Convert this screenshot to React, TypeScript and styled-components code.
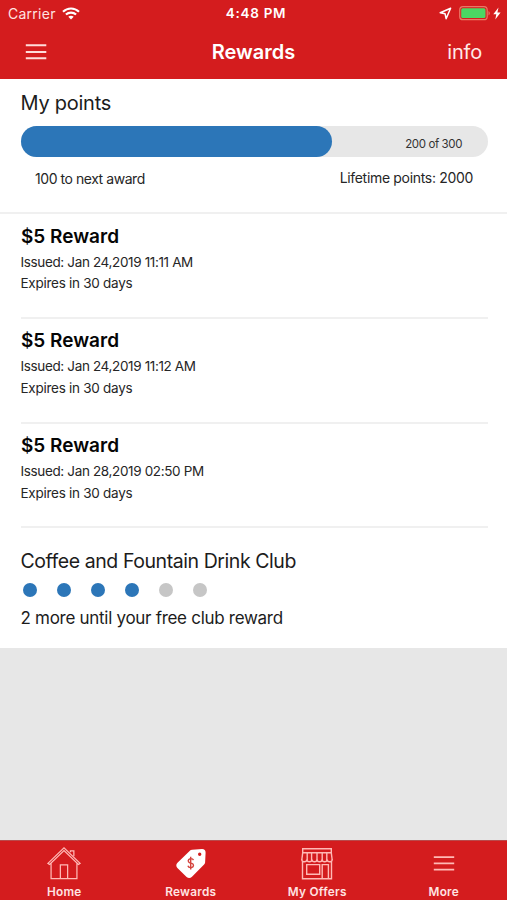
import React from "react";
import styled, { createGlobalStyle } from "styled-components";

const GlobalStyle = createGlobalStyle`
  * { box-sizing: border-box; }
  html, body { margin: 0; padding: 0; }
  body { font-family: Inter, "Liberation Sans", sans-serif; }
`;

const Screen = styled.div`
  display: flex;
  flex-direction: column;
  width: 507px;
  height: 900px;
  overflow: hidden;
  background: #e7e7e7;
  color: #1c1c1c;
`;

const Header = styled.header`
  flex: none;
  height: 79px;
  background: #d41c1e;
  color: #fff;
`;

const StatusBar = styled.div`
  display: grid;
  grid-template-columns: 1fr auto 1fr;
  align-items: center;
  height: 27px;
  padding: 0 6px 0 8px;
`;

const StatusGroup = styled.div<{ $end?: boolean }>`
  display: flex;
  align-items: center;
  justify-content: ${(p) => (p.$end ? "flex-end" : "flex-start")};
`;

const Carrier = styled.span`
  margin-right: 6px;
  color: #ffe3e2;
  font-size: 14px;
  line-height: 27px;
  letter-spacing: 0.26px;
`;

const Clock = styled.span`
  padding-left: 3px;
  font-size: 13.5px;
  font-weight: 600;
  line-height: 27px;
  letter-spacing: 0.7px;
`;

const NavBar = styled.div`
  display: grid;
  grid-template-columns: 1fr auto 1fr;
  align-items: center;
  height: 50px;
  padding: 0 25px;
`;

const NavTitle = styled.h1`
  margin: 0;
  font-size: 20px;
  font-weight: 600;
  line-height: 50px;
  letter-spacing: 0;
`;

const InfoButton = styled.button`
  justify-self: end;
  padding: 0;
  border: 0;
  background: none;
  color: #ffe9e8;
  font: 400 20px/50px Inter, sans-serif;
  letter-spacing: -0.2px;
`;

const MenuButton = styled.button`
  display: flex;
  padding: 0;
  border: 0;
  background: none;
`;

const Points = styled.section`
  flex: none;
  height: 135px;
  padding: 12px 20px 0 20.5px;
  border-bottom: 2px solid #f0f0f0;
  background: #fff;
`;

const SectionTitle = styled.h2<{ $spacing: number; $size: number }>`
  margin: 0;
  font-size: ${(p) => p.$size}px;
  font-weight: 400;
  line-height: 24px;
  letter-spacing: ${(p) => p.$spacing}px;
  white-space: nowrap;
`;

const Track = styled.div`
  display: flex;
  height: 31.5px;
  margin-top: 10.5px;
  width: 467px;
  border-radius: 16px;
  background: #e7e7e7;
`;

const Fill = styled.div`
  flex: none;
  border-radius: 16px;
  background: #2c76b8;
`;

const TrackLabel = styled.span`
  flex: 1;
  padding: 1px 25.5px 0 0;
  color: #333;
  font-size: 11.5px;
  line-height: 34px;
  letter-spacing: -0.4px;
  text-align: right;
`;

const PointsMeta = styled.div`
  display: flex;
  justify-content: space-between;
  padding: 12px 14px 0 14.5px;
`;

const MetaText = styled.span<{ $spacing: number; $drop?: boolean }>`
  padding-top: ${(p) => (p.$drop ? 1 : 0)}px;
  color: #262626;
  font-size: 14px;
  line-height: 18px;
  letter-spacing: ${(p) => p.$spacing}px;
`;

const Rewards = styled.section`
  flex: none;
  height: 434px;
  padding: 0 19.5px 0 20.5px;
  background: #fff;
`;

const RewardRow = styled.article`
  height: 104.8px;
  padding-top: 9.5px;
  border-bottom: 2px solid #f0f0f0;
`;

const RewardTitle = styled.h3`
  margin: 0 0 2px 0.5px;
  color: #050505;
  font-size: 19px;
  font-weight: 600;
  line-height: 26px;
  letter-spacing: 0;
`;

const RewardDetail = styled.p<{ $spacing: number }>`
  margin: 0;
  color: #262626;
  font-size: 13.5px;
  line-height: 21.5px;
  letter-spacing: ${(p) => p.$spacing}px;
`;

const Club = styled.div`
  padding-top: 20.5px;
`;

const Dots = styled.div`
  display: flex;
  gap: 20.2px;
  margin: 10px 0 0 2px;
`;

const Dot = styled.span<{ $filled: boolean }>`
  width: 14px;
  height: 14px;
  border-radius: 50%;
  background: ${(p) => (p.$filled ? "#2c76b8" : "#c6c6c6")};
`;

const ClubNote = styled.p`
  margin: 9px 0 0;
  font-size: 17px;
  font-weight: 400;
  line-height: 24px;
  letter-spacing: -0.29px;
`;

const TabBar = styled.nav`
  display: grid;
  grid-template-columns: repeat(4, 1fr);
  flex: none;
  height: 60px;
  margin-top: auto;
  padding-left: 1px;
  border-top: 1px solid #b94a4b;
  background: #d41c1e;
`;

const Tab = styled.a`
  display: flex;
  flex-direction: column;
  align-items: center;
  padding-top: 4.5px;
  color: #ffe3e2;
`;

const TabLabel = styled.span`
  margin-top: 2.5px;
  font-size: 11.8px;
  font-weight: 600;
  line-height: 16px;
  letter-spacing: 0.25px;
`;

const WifiIcon = () => (
  <svg width="18" height="13" viewBox="0 0 18 13" fill="none" stroke="#fff" strokeWidth="2.1">
    <path d="M1 4.7C5.5.4 12.5.4 17 4.7M3.9 7.6c2.9-2.7 7.3-2.7 10.2 0" />
    <path d="M9 12.5 6.3 9.8c1.5-1.3 3.9-1.3 5.4 0z" fill="#fff" stroke="none" />
  </svg>
);

const LocationIcon = () => (
  <svg width="13" height="13" viewBox="0 0 13 13" fill="none" stroke="#fff" strokeWidth="1.5" strokeLinejoin="round">
    <path d="M11.6 1.2 1.2 5.7l4.9 1.1 1 4.9z" />
  </svg>
);

const BatteryIcon = () => (
  <svg width="32" height="15" viewBox="0 0 32 15">
    <rect x=".7" y=".7" width="27.5" height="13" rx="3.3" fill="none" stroke="#e97866" strokeWidth="1.2" />
    <rect x="2.2" y="2.3" width="24.3" height="9.8" rx="1.5" fill="#4bd763" />
    <path d="M29.5 5v4.4c1.8-.7 1.8-3.7 0-4.4" fill="#e97866" />
  </svg>
);

const BoltIcon = () => (
  <svg width="8" height="13" viewBox="0 0 8 13" fill="#fff">
    <path d="M5.5.6.3 7.3h3L2.3 12.4l5.3-7H4.4z" />
  </svg>
);

const MenuIcon = () => (
  <svg width="22" height="16" viewBox="0 0 22 16" stroke="#ffdcda" strokeWidth="2">
    <path d="M.8 1.2h20.5M.8 8h20.5M.8 14.2h20.5" />
  </svg>
);

const HomeIcon = () => (
  <svg width="36" height="36" viewBox="-.8 -.5 37.6 37.6" fill="none" stroke="#ffb9b5" strokeWidth="1.3">
    <path d="M4.5 17.3v16.2h27V17.3M1.2 17.6 18 1.4l16.8 16.2-1.7 1.2L18 4.2 2.9 18.8z" />
    <path d="M24.7 6V4.6h3.6v5.7M14.2 33.5V19.3h7.6v14.2" />
  </svg>
);

const TagIcon = () => (
  <svg width="36" height="36" viewBox="0 0 36 36">
    <path
      fillRule="evenodd"
      fill="#fff"
      d="M19.2 3.8 29 3.1c2.5 0 3.6 1.2 3.6 3.7l-.5 9.7c0 .8-.4 1.5-1 2.1L19 30.8c-1.7 1.6-3.7 1.6-5.4.2L4.4 22c-1.5-1.7-1.5-3.6.1-5.2L16.6 4.9c.8-.7 1.6-1 2.6-1.1zM26.7 6.6a1.7 1.7 0 1 0 0 3.4 1.7 1.7 0 0 0 0-3.4z"
    />
    <path d="M20.5 14.1c-.7-1.4-2-1.7-3.3-1.4-2.4.5-2.7 3.3-.4 4.1l2 .6c2.3.8 2.2 3.5-.1 4.1-1.7.4-3.3-.2-3.8-1.7M17.7 10.7v12.8" fill="none" stroke="#d4423c" strokeWidth="1.4" />
  </svg>
);

const StoreIcon = () => (
  <svg width="36" height="36" viewBox="0 0 36 36" fill="none" stroke="#ffb9b5" strokeWidth="1.4">
    <path d="M3.7 2.8h28.6v4H3.7zM3.7 6.8 2.8 14M32.3 6.8l.9 7.2M8.2 6.8V14M12.6 6.8V14M18 6.8V14M23.2 6.8V14M27.8 6.8V14" />
    <path d="M2.8 13.5c0 3 4.9 3 5.1 0 .1 3 4.9 3 5 0 .1 3 5 3 5.1 0 .1 3 5 3 5.1 0 .1 3 4.9 3 5 0 .2 3 5.1 3 5.1 0M3.5 15.8v16.9h29V15.8M7.7 18.6h13v9.7h-13zM23.2 32.7V18.6h6.2v14.1" />
  </svg>
);

const MoreIcon = () => (
  <svg width="36" height="36" viewBox="0 0 36 36" stroke="#ffb9b5" strokeWidth="1.8">
    <path d="M7.8 11.2h20.4M7.8 17.4h20.4M7.8 23.7h20.4" />
  </svg>
);

const StatusIcon = styled.span<{ $after: number }>`
  display: flex;
  margin-right: ${(p) => p.$after}px;
`;

const rewards = [
  { issued: "Jan 24,2019 11:11 AM" },
  { issued: "Jan 24,2019 11:12 AM" },
  { issued: "Jan 28,2019 02:50 PM" },
];

const tabs = [
  { label: "Home", Icon: HomeIcon },
  { label: "Rewards", Icon: TagIcon },
  { label: "My Offers", Icon: StoreIcon },
  { label: "More", Icon: MoreIcon },
];

const points = { current: 200, target: 300, lifetime: 2000 };

export default function App() {
  return (
    <Screen>
      <GlobalStyle />
      <Header>
        <StatusBar>
          <StatusGroup>
            <Carrier>Carrier</Carrier>
            <WifiIcon />
          </StatusGroup>
          <Clock>4:48 PM</Clock>
          <StatusGroup $end>
            <StatusIcon $after={7}>
              <LocationIcon />
            </StatusIcon>
            <StatusIcon $after={2}>
              <BatteryIcon />
            </StatusIcon>
            <BoltIcon />
          </StatusGroup>
        </StatusBar>
        <NavBar>
          <MenuButton aria-label="Menu">
            <MenuIcon />
          </MenuButton>
          <NavTitle>Rewards</NavTitle>
          <InfoButton>info</InfoButton>
        </NavBar>
      </Header>
      <Points>
        <SectionTitle $size={20} $spacing={-0.25}>My points</SectionTitle>
        <Track>
          <Fill style={{ width: `${(points.current / points.target) * 100}%` }} />
          <TrackLabel>
            {points.current} of {points.target}
          </TrackLabel>
        </Track>
        <PointsMeta>
          <MetaText $spacing={-0.45} $drop>{points.target - points.current} to next award</MetaText>
          <MetaText $spacing={-0.32}>Lifetime points: {points.lifetime}</MetaText>
        </PointsMeta>
      </Points>
      <Rewards>
        {rewards.map((reward) => (
          <RewardRow key={reward.issued}>
            <RewardTitle>$5 Reward</RewardTitle>
            <RewardDetail $spacing={-0.36}>Issued: {reward.issued}</RewardDetail>
            <RewardDetail $spacing={-0.27}>Expires in 30 days</RewardDetail>
          </RewardRow>
        ))}
        <Club>
          <SectionTitle $size={19.5} $spacing={-0.43}>Coffee and Fountain Drink Club</SectionTitle>
          <Dots>
            {[0, 1, 2, 3, 4, 5].map((i) => (
              <Dot key={i} $filled={i < 4} />
            ))}
          </Dots>
          <ClubNote>2 more until your free club reward</ClubNote>
        </Club>
      </Rewards>
      <TabBar>
        {tabs.map(({ label, Icon }) => (
          <Tab key={label}>
            <Icon />
            <TabLabel>{label}</TabLabel>
          </Tab>
        ))}
      </TabBar>
    </Screen>
  );
}
